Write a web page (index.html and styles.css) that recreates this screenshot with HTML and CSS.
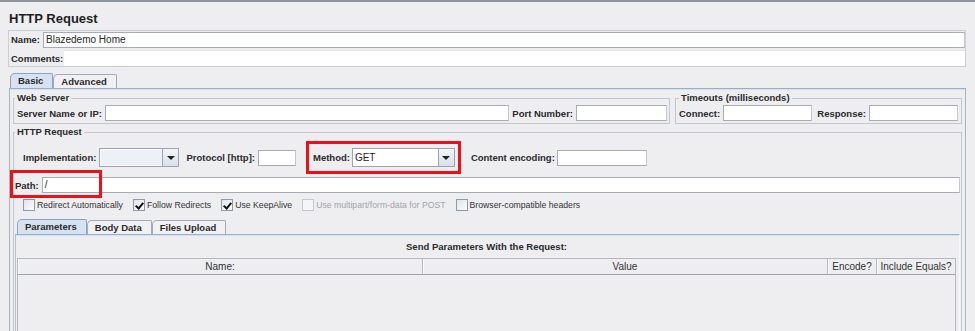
FILE: index.html
```html
<!DOCTYPE html>
<html>

<head>
  <meta charset="utf-8">
  <link rel="stylesheet" href="styles.css">
</head>

<body>
  <div class="page">
    <h1 class="title">HTTP Request</h1>

    <div class="namebox">
      <div class="namebox-row">
        <span class="lbl">Name:</span>
        <div class="text-input grow">Blazedemo Home</div>
      </div>
      <div class="namebox-row">
        <span class="lbl">Comments:</span>
        <div class="comments-area"></div>
      </div>
    </div>

    <div class="tabs">
      <div class="tab active">Basic</div>
      <div class="tab">Advanced</div>
    </div>

    <div class="tab-panel">
      <div class="top-row">
        <fieldset class="group web-server">
          <legend>Web Server</legend>
          <div class="form-row">
            <span class="lbl">Server Name or IP:</span>
            <div class="text-input grow"></div>
            <span class="lbl">Port Number:</span>
            <div class="text-input port"></div>
          </div>
        </fieldset>
        <fieldset class="group timeouts">
          <legend>Timeouts (milliseconds)</legend>
          <div class="form-row">
            <span class="lbl">Connect:</span>
            <div class="text-input grow"></div>
            <span class="lbl">Response:</span>
            <div class="text-input grow"></div>
          </div>
        </fieldset>
      </div>

      <fieldset class="group http-request">
        <legend>HTTP Request</legend>

        <div class="impl-row">
          <span class="lbl">Implementation:</span>
          <div class="combo impl">
            <div class="combo-value"></div>
            <div class="combo-arrow"></div>
          </div>
          <span class="lbl protocol-lbl">Protocol [http]:</span>
          <div class="text-input protocol"></div>
          <div class="highlight method-box">
            <span class="lbl">Method:</span>
            <div class="combo method">
              <div class="combo-value">GET</div>
              <div class="combo-arrow"></div>
            </div>
          </div>
          <span class="lbl encoding-lbl">Content encoding:</span>
          <div class="text-input encoding"></div>
        </div>

        <div class="path-row">
          <span class="lbl">Path:</span>
          <div class="text-input grow">/</div>
          <div class="highlight path-box"></div>
        </div>

        <div class="check-row">
          <label class="check"><span class="box"></span>Redirect Automatically</label>
          <label class="check"><span class="box checked"></span>Follow Redirects</label>
          <label class="check"><span class="box checked"></span>Use KeepAlive</label>
          <label class="check disabled"><span class="box"></span>Use multipart/form-data for POST</label>
          <label class="check"><span class="box"></span>Browser-compatible headers</label>
        </div>

        <div class="tabs subtabs">
          <div class="tab active">Parameters</div>
          <div class="tab">Body Data</div>
          <div class="tab">Files Upload</div>
        </div>

        <div class="subpanel">
          <div class="caption">Send Parameters With the Request:</div>
          <div class="params-table">
            <div class="th">Name:</div>
            <div class="th">Value</div>
            <div class="th">Encode?</div>
            <div class="th">Include Equals?</div>
          </div>
          <div class="table-body"></div>
        </div>
      </fieldset>
    </div>
  </div>
</body>

</html>
```

FILE: styles.css
```css
* {
  box-sizing: border-box;
}

body {
  margin: 0;
  background: #eeeef1;
  font-family: "Liberation Sans", Arial, sans-serif;
  font-size: 10px;
  color: #262626;
}

.page {
  height: 331px;
  overflow: hidden;
  border-top: 2px solid #8f949c;
  padding: 0 9px 0 8px;
}

.title {
  margin: 0;
  height: 28px;
  padding: 7px 0 0 1px;
  font-size: 13px;
  line-height: 20px;
  font-weight: bold;
  color: #1e1e1e;
}

.lbl {
  font-weight: bold;
  font-size: 9.5px;
  white-space: nowrap;
  color: #2a2a2a;
}

.grow {
  flex: 1;
  min-width: 0;
}

.text-input {
  height: 16px;
  background: #fff;
  border: 1px solid #a7acb4;
  border-right-color: #c4c8ce;
  padding: 0 2px;
  font-size: 10px;
  line-height: 14px;
  white-space: nowrap;
}

/* name / comments */
.namebox {
  border: 1px solid #cbced3;
}

.namebox-row {
  display: flex;
  align-items: center;
  gap: 3px;
  height: 17px;
  padding-left: 2px;
}

.namebox-row + .namebox-row {
  gap: 1px;
  height: 18px;
  padding-top: 2px;
}

.comments-area {
  flex: 1;
  height: 16px;
  background: #fff;
  border-top: 1px solid #e4e5e8;
}

/* tabs */
.tabs {
  display: flex;
  align-items: flex-end;
  height: 15px;
  margin-top: 6px;
  padding-left: 2px;
}

.tab {
  height: 14px;
  padding: 0 9px 0 7px;
  border: 1px solid #a3abb6;
  border-bottom: none;
  border-radius: 5px 2px 0 0;
  font-weight: bold;
  font-size: 9.5px;
  line-height: 13px;
  background: #f1f1f4;
  color: #2a2a2a;
}

.tab.active {
  height: 15px;
  background: #d5e2f1;
  border-color: #8ea3bc;
}

.tab-panel {
  margin-left: 1px;
  height: 300px;
  border: 1px solid #aab2bd;
  border-top-color: #98aecb;
  box-shadow: inset 0 1px #d6e1ee;
  padding: 4px 3px 0;
}

/* titled groups */
.group {
  margin: 0;
  min-width: 0;
  border: 1px solid #c3c6cc;
  padding: 0 1px 2px 1px;
}

.group legend {
  padding: 0 2px;
  font-weight: bold;
  font-size: 9.5px;
  line-height: 10px;
  color: #2a2a2a;
}

.top-row {
  display: flex;
  gap: 5px;
}

.web-server {
  width: 657px;
}

.timeouts {
  flex: 1;
}

.timeouts legend {
  margin-left: 2px;
}

.form-row {
  display: flex;
  align-items: center;
  gap: 3px;
  margin-top: 2px;
  padding-left: 2px;
}

.web-server .form-row {
  padding-right: 1px;
}

.timeouts .form-row .lbl + .text-input {
  margin-right: 2px;
}

.port {
  width: 91px;
}

.http-request {
  margin-top: 3px;
  height: 260px;
}

/* implementation row */
.impl-row {
  display: flex;
  align-items: center;
  height: 33px;
  margin-top: 4px;
  padding-left: 8px;
}

.impl-row > .lbl {
  margin-right: 4px;
}

.combo {
  display: flex;
  height: 19px;
  border: 1px solid #9ba4b0;
  background: #fff;
}

.combo.impl {
  width: 80px;
  margin-left: -1px;
  background: #edf0f4;
  box-shadow: inset 0 0 0 1px #f8f9fb;
}

.combo.method {
  width: 103px;
}

.combo-value {
  flex: 1;
  padding-left: 2px;
  font-size: 10px;
  line-height: 17px;
}

.combo-arrow {
  width: 16px;
  border-left: 1px solid #9ba4b0;
  background: linear-gradient(#f3f5f8, #d9e0e8);
  display: flex;
  align-items: center;
  justify-content: center;
}

.combo-arrow::after {
  content: "";
  border-left: 4px solid transparent;
  border-right: 4px solid transparent;
  border-top: 4px solid #222;
}

.protocol-lbl {
  margin-left: 7px;
}

.impl-row > .protocol-lbl {
  margin-right: 3px;
}

.protocol {
  width: 38px;
}

.highlight {
  border: 3px solid #e8121c;
}

.method-box {
  display: flex;
  align-items: center;
  gap: 2px;
  height: 33px;
  margin-left: 10px;
  padding: 0 3px 0 4px;
}

.encoding-lbl {
  margin-left: 10px;
}

.impl-row > .encoding-lbl {
  margin-right: 2px;
}

.encoding {
  width: 90px;
}

/* path row */
.path-row {
  position: relative;
  display: flex;
  align-items: center;
  gap: 3px;
  height: 22px;
}

.path-box {
  position: absolute;
  left: -5px;
  top: -4px;
  width: 92px;
  height: 28px;
}

/* checkboxes */
.check-row {
  display: flex;
  align-items: center;
  gap: 10px;
  height: 17px;
  padding-left: 8px;
}

.check {
  display: flex;
  align-items: center;
  gap: 1px;
  font-size: 8.7px;
  color: #333;
  white-space: nowrap;
}

.box {
  position: relative;
  width: 12px;
  height: 12px;
  margin-right: 1px;
  border: 1px solid #8e9aab;
  background: linear-gradient(135deg, #dfe5ec, #fbfcfd);
}

.box.checked::after {
  content: "";
  position: absolute;
  left: 3px;
  top: 1px;
  width: 3px;
  height: 6px;
  border: solid #111;
  border-width: 0 2px 2px 0;
  transform: rotate(40deg);
}

.check.disabled {
  color: #a2a4a8;
}

.check.disabled .box {
  border-color: #c3c8cf;
  background: #f4f5f7;
}

/* sub tabs + parameter table */
.subtabs {
  padding-left: 2px;
}

.subpanel {
  border: 1px solid #b9c0c9;
  border-top-color: #98aecb;
  box-shadow: inset 0 1px #d6e1ee;
  border-right-color: #f6f8fb;
  padding: 0 3px 0 1px;
  height: 120px;
}

.caption {
  height: 23px;
  text-align: center;
  font-weight: bold;
  font-size: 9.5px;
  line-height: 23px;
  color: #2a2a2a;
}

.params-table {
  display: grid;
  grid-template-columns: 405px 405px 49px 1fr;
  height: 17px;
  border: 1px solid #b5bac2;
  border-bottom-color: #9ea5af;
}

.th {
  text-align: center;
  font-size: 10px;
  line-height: 15px;
  color: #333;
  border-right: 1px solid #b5bac2;
  box-shadow: inset 1px 0 #fafafb;
}

.th:last-child {
  border-right: none;
}

.table-body {
  height: 80px;
  border-left: 1px solid #b5bac2;
  border-right: 1px solid #b5bac2;
}
```
